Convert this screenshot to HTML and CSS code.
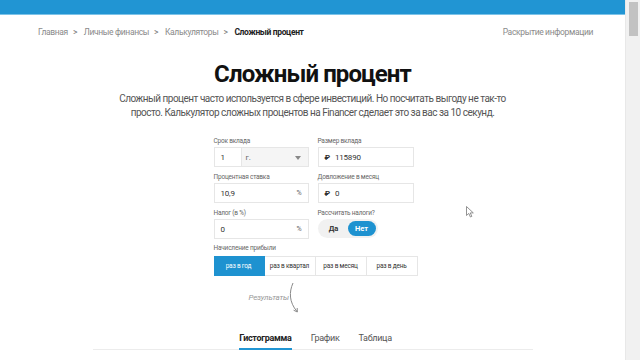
FILE: index.html
```html
<!DOCTYPE html>
<html lang="ru">
<head>
    <meta charset="UTF-8">
    <title>Сложный процент</title>
    <link rel="stylesheet" href="styles.css">
</head>
<body>
    <div class="page">
        <div class="main">
            <div class="topbar"></div>

            <div class="crumbs">
                <div class="crumbs-path">
                    <span>Главная</span><span class="sep">&gt;</span>
                    <span>Личные финансы</span><span class="sep">&gt;</span>
                    <span>Калькуляторы</span><span class="sep">&gt;</span>
                    <b>Сложный процент</b>
                </div>
                <div class="disclosure">Раскрытие информации</div>
            </div>

            <h1 class="title">Сложный процент</h1>
            <p class="lead">Сложный процент часто используется в сфере инвестиций. Но посчитать выгоду не так-то просто. Калькулятор сложных процентов на Financer сделает это за вас за 10 секунд.</p>

            <div class="calc">
                <div class="grid">
                    <div class="field">
                        <div class="label">Срок вклада</div>
                        <div class="box split">
                            <span class="num">1</span>
                            <span class="unit">г.<i class="caret"></i></span>
                        </div>
                    </div>
                    <div class="field">
                        <div class="label">Размер вклада</div>
                        <div class="box"><span class="rub">₽</span>115890</div>
                    </div>
                    <div class="field">
                        <div class="label">Процентная ставка</div>
                        <div class="box spread"><span>10,9</span><span class="pct">%</span></div>
                    </div>
                    <div class="field">
                        <div class="label">Довложение в месяц</div>
                        <div class="box"><span class="rub">₽</span>0</div>
                    </div>
                    <div class="field">
                        <div class="label">Налог (в %)</div>
                        <div class="box spread"><span>0</span><span class="pct">%</span></div>
                    </div>
                    <div class="field">
                        <div class="label">Рассчитать налоги?</div>
                        <div class="toggle">
                            <span class="opt">Да</span>
                            <span class="opt on">Нет</span>
                        </div>
                    </div>
                </div>

                <div class="label accrual">Начисление прибыли</div>
                <div class="segments">
                    <span class="seg active">раз в год</span>
                    <span class="seg">раз в квартал</span>
                    <span class="seg">раз в месяц</span>
                    <span class="seg">раз в день</span>
                </div>

                <div class="results">
                    <span class="results-text">Результаты</span>
                    <svg class="arrow" width="12" height="31" viewBox="0 0 12 31">
                        <path d="M4 1 C0 10 0 20 8 29.5" fill="none" stroke="#8a8a8a" stroke-width="1"/>
                        <path d="M4.6 28.2 L8.3 30 L8.2 26" fill="none" stroke="#8a8a8a" stroke-width="1"/>
                    </svg>
                </div>
            </div>

            <div class="tabs">
                <span class="tab current">Гистограмма</span>
                <span class="tab">График</span>
                <span class="tab">Таблица</span>
            </div>

            <svg class="cursor" width="8" height="12" viewBox="0 0 8 12">
                <path d="M0.5 0.5 L0.5 9.5 L2.8 7.4 L4.4 11 L5.8 10.4 L4.3 6.9 L7.3 6.9 Z" fill="#fff" stroke="#777" stroke-width="0.8"/>
            </svg>
        </div>
        <div class="scrollbar"><div class="thumb"></div></div>
    </div>
</body>
</html>
```

FILE: styles.css
```css
* {
    box-sizing: border-box;
}

html, body {
    margin: 0;
    height: 100%;
    overflow: hidden;
}

body {
    font-family: Roboto, "Noto Sans", Arial, sans-serif;
    color: #222;
    background: #fff;
}

.page {
    display: flex;
    height: 360px;
}

.main {
    flex: 1;
    position: relative;
}

.scrollbar {
    width: 15px;
    background: #f1f1f1;
    border-left: 1px solid #e8e8e8;
    padding: 2px 2px 0 3px;
}

.thumb {
    height: 34px;
    background: #c2c2c2;
}

.topbar {
    height: 15px;
    background: #2195d3;
    border-bottom: 1px solid #7cc3e8;
    margin-bottom: 2px;
}

.crumbs {
    display: flex;
    justify-content: space-between;
    align-items: center;
    padding: 0 32px 0 38px;
    margin-top: 10px;
    height: 14px;
    font-size: 8.5px;
    letter-spacing: -0.35px;
    color: #8a8a8a;
}

.crumbs-path b {
    color: #222;
    font-weight: 700;
}

.sep {
    margin: 0 5px;
    color: #777;
}

.title {
    margin: 20px 0 0;
    text-align: center;
    font-size: 24px;
    letter-spacing: -0.9px;
    line-height: 30px;
    font-weight: 700;
    color: #111;
}

.lead {
    width: 400px;
    margin: 3px auto 0;
    text-align: center;
    font-size: 10px;
    letter-spacing: -0.5px;
    line-height: 14px;
    color: #555;
}

.calc {
    width: 204px;
    margin: 17px auto 0;
    position: relative;
    left: 3px;
}

.grid {
    display: grid;
    grid-template-columns: 95px 96px;
    column-gap: 9px;
    row-gap: 6px;
}

.label {
    font-size: 6.5px;
    letter-spacing: -0.2px;
    line-height: 8px;
    height: 8px;
    color: #666;
    margin-bottom: 2px;
}

.label.accrual {
    margin-top: 5px;
    margin-bottom: 4px;
}

.box {
    height: 20px;
    border: 1px solid #e6e6e6;
    background: #fff;
    display: flex;
    align-items: center;
    padding: 0 6px;
    font-size: 8px;
    letter-spacing: -0.2px;
    color: #333;
}

.spread {
    justify-content: space-between;
}

.pct {
    font-size: 7px;
    color: #666;
}

.rub {
    margin-right: 5px;
    font-weight: 700;
    font-size: 8px;
}

.split {
    padding: 0;
}

.num {
    width: 26px;
    padding-left: 6px;
    height: 100%;
    display: flex;
    align-items: center;
}

.unit {
    flex: 1;
    height: 100%;
    background: #f5f5f5;
    border-left: 1px solid #e6e6e6;
    display: flex;
    align-items: center;
    justify-content: space-between;
    padding: 0 7px 0 4px;
    color: #666;
}

.caret {
    width: 0;
    height: 0;
    border-left: 3px solid transparent;
    border-right: 3px solid transparent;
    border-top: 4px solid #888;
    margin-top: 2px;
}

.toggle {
    width: 60px;
    height: 19px;
    margin-top: 1px;
    border-radius: 10px;
    background: #f1f1f1;
    display: flex;
    align-items: center;
    padding: 0 2px;
    font-size: 7.5px;
    font-weight: 700;
    color: #333;
}

.opt {
    flex: 1;
    text-align: center;
    line-height: 15px;
    border-radius: 8px;
}

.opt.on {
    background: #1e92d0;
    color: #fff;
}

.segments {
    display: flex;
    height: 20px;
}

.seg {
    width: 51px;
    display: flex;
    align-items: center;
    justify-content: center;
    font-size: 6.5px;
    letter-spacing: -0.2px;
    color: #333;
    border: 1px solid #e6e6e6;
    border-left: none;
    white-space: nowrap;
}

.seg.active {
    background: #1e92d0;
    border-color: #1e92d0;
    color: #fff;
}

.results {
    display: flex;
    align-items: flex-start;
    margin: 6px 0 0 35px;
}

.results-text {
    font-size: 8px;
    letter-spacing: -0.2px;
    font-style: italic;
    color: #999;
    margin-top: 11px;
    margin-right: 0;
}

.arrow {
    display: block;
}

.tabs {
    display: flex;
    justify-content: center;
    gap: 19px;
    margin: 20px auto 0;
    width: 440px;
    border-bottom: 1px solid #ececec;
    padding-left: 6px;
}

.tab {
    font-size: 9px;
    letter-spacing: -0.3px;
    color: #555;
    padding-bottom: 5px;
    border-bottom: 2px solid transparent;
    margin-bottom: -1px;
}

.tab.current {
    color: #222;
    font-weight: 700;
    border-bottom-color: #2195d3;
}

.cursor {
    position: absolute;
    left: 466px;
    top: 206px;
}
```
